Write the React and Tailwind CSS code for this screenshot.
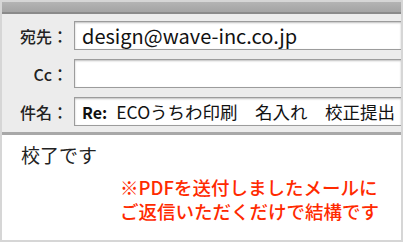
const JP = "font-['Noto_Sans_CJK_JP','Noto_Sans',sans-serif]";

function Field({ label, children }) {
  return (
    <div className="flex items-center h-[29px]">
      <div className="w-[72px] shrink-0 pr-[6px] text-right text-[16px] leading-none text-[#222] font-medium">{label}</div>
      <div className="flex-1 h-full flex items-center bg-white border border-[#9c9c9c] border-r-0 shadow-[inset_0_1px_2px_rgba(0,0,0,0.25)] pl-[7px] text-[20px] leading-none text-[#111] whitespace-nowrap overflow-hidden">
        {children}
      </div>
    </div>
  );
}

export default function App() {
  return (
    <div className={`w-[403px] h-[242px] bg-white border-[2px] border-[#d6d6d6] flex flex-col overflow-hidden ${JP}`}>
      {/* title bar */}
      <div className="h-[12px] shrink-0 bg-gradient-to-b from-[#b4b4b4] to-[#a4a4a4] border-b-[2px] border-[#8a8a8a]" />

      {/* header fields */}
      <div className="bg-[#ececec] pt-[7px] pb-[6px] flex flex-col gap-[9px] border-b-[3px] border-[#a8a8a8]">
        <Field label="宛先：">design@wave-inc.co.jp</Field>
        <Field label="Cc："></Field>
        <Field label="件名：">
          <span className="font-bold text-[16px] mr-[9px]">Re:</span>
          <span className="text-[17.5px]">ECOうちわ印刷　名入れ　校正提出</span>
        </Field>
      </div>

      {/* body */}
      <div className="flex-1 pl-[19px] pt-[10px]">
        <p className="text-[19px] leading-none text-[#222]">校了です</p>
        <div className="mt-[11px] ml-[99px] text-[18.5px] leading-[24px] text-[#ff2a00] font-medium">
          <p>※PDFを送付しましたメールに</p>
          <p>ご返信いただくだけで結構です</p>
        </div>
      </div>
    </div>
  );
}
